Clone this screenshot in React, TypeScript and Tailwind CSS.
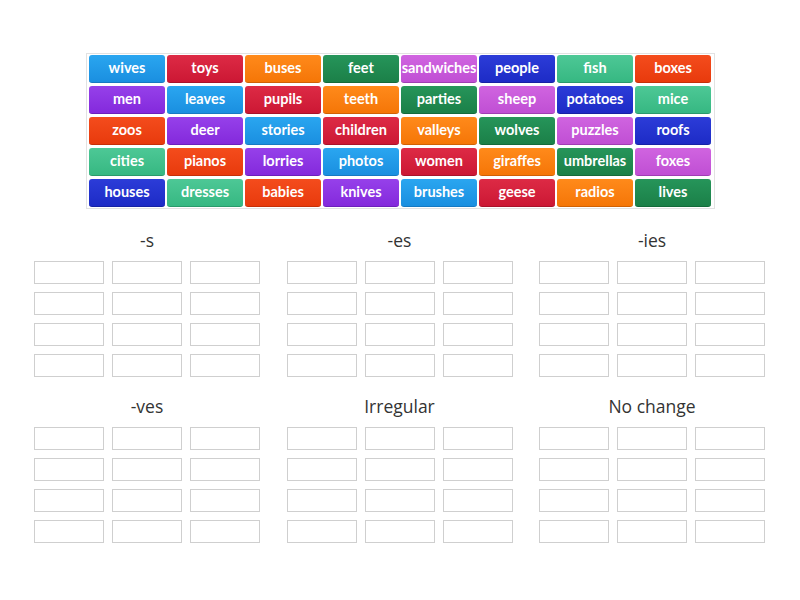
import React from 'react';

const WORDS = [
  'wives', 'toys', 'buses', 'feet', 'sandwiches', 'people', 'fish', 'boxes',
  'men', 'leaves', 'pupils', 'teeth', 'parties', 'sheep', 'potatoes', 'mice',
  'zoos', 'deer', 'stories', 'children', 'valleys', 'wolves', 'puzzles', 'roofs',
  'cities', 'pianos', 'lorries', 'photos', 'women', 'giraffes', 'umbrellas', 'foxes',
  'houses', 'dresses', 'babies', 'knives', 'brushes', 'geese', 'radios', 'lives',
];

// colours repeat every 9 tiles
const TILE_COLORS = [
  'bg-gradient-to-b from-[#2aa6f0] to-[#1a8fe0] border-[#1679c2]',
  'bg-gradient-to-b from-[#dd2a45] to-[#cc1734] border-[#a9122a]',
  'bg-gradient-to-b from-[#ff8a1a] to-[#f57606] border-[#d06104]',
  'bg-gradient-to-b from-[#26955a] to-[#1b8048] border-[#146a3a]',
  'bg-gradient-to-b from-[#d064e0] to-[#c04fd4] border-[#a03db4]',
  'bg-gradient-to-b from-[#2c3cd8] to-[#1d2bc6] border-[#1622a4]',
  'bg-gradient-to-b from-[#4dc896] to-[#36b882] border-[#2a9a6b]',
  'bg-gradient-to-b from-[#f44c1c] to-[#e83a0c] border-[#c52f08]',
  'bg-gradient-to-b from-[#9640ea] to-[#8429dc] border-[#6c1fbb]',
];

const GROUPS = ['-s', '-es', '-ies', '-ves', 'Irregular', 'No change'];

const DropGroup = ({ title }: { title: string }) => (
  <div className="flex flex-col items-center">
    <div className="h-6 text-[17.5px] leading-6 text-[#333]">{title}</div>
    <div className="mt-[9px] grid grid-cols-[70px_70px_70px] gap-x-2 gap-y-2">
      {Array.from({ length: 12 }).map((_, i) => (
        <div key={i} className="h-[23px] border border-[#cfcfcf] bg-white" />
      ))}
    </div>
  </div>
);

export default function App() {
  return (
    <div className="w-[800px] h-[600px] bg-white font-['Open_Sans',sans-serif]">
      <div className="pt-[53px] pl-[86px]">
        <div className="w-[629px] border border-[#e2e2e2] px-[2px] py-[1px]">
          <div className="grid grid-cols-[repeat(8,76px)] gap-x-[2px] gap-y-[3px]">
            {WORDS.map((w, i) => (
              <div
                key={w}
                className={`h-[28px] rounded-[3px] border-b flex items-center justify-center pb-[1px] text-white text-[14.5px] font-bold font-['Lato',sans-serif] ${TILE_COLORS[i % 9]}`}
              >
                {w}
              </div>
            ))}
          </div>
        </div>
      </div>

      <div className="pl-[34px] mt-[19px] grid grid-cols-[226px_226px_226px] gap-x-[26.5px] gap-y-[17px]">
        {GROUPS.map((g) => (
          <DropGroup key={g} title={g} />
        ))}
      </div>
    </div>
  );
}
